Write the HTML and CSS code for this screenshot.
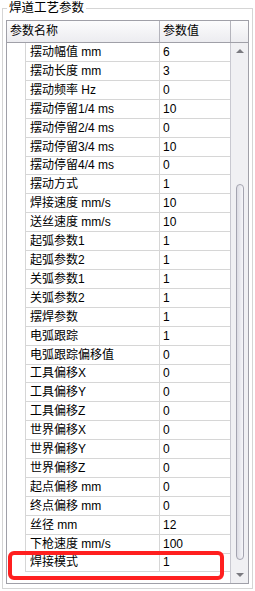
FILE: index.html
```html
<!DOCTYPE html>
<html lang="zh">
<head>
    <meta charset="UTF-8">
    <link rel="stylesheet" href="styles.css">
    <title>焊道工艺参数</title>
</head>
<body>
    <fieldset class="group">
        <legend class="title">焊道工艺参数</legend>
        <div class="grid">
            <div class="head">
                <div class="hcell">参数名称</div>
                <div class="hcell">参数值</div>
                <div class="hcell last"></div>
            </div>
            <div class="body">
                <div class="rows">
                    <div class="row"><div class="gut"></div><div class="name">摆动幅值 mm</div><div class="val">6</div></div>
                    <div class="row"><div class="gut"></div><div class="name">摆动长度 mm</div><div class="val">3</div></div>
                    <div class="row"><div class="gut"></div><div class="name">摆动频率 Hz</div><div class="val">0</div></div>
                    <div class="row"><div class="gut"></div><div class="name">摆动停留1/4 ms</div><div class="val">10</div></div>
                    <div class="row"><div class="gut"></div><div class="name">摆动停留2/4 ms</div><div class="val">0</div></div>
                    <div class="row"><div class="gut"></div><div class="name">摆动停留3/4 ms</div><div class="val">10</div></div>
                    <div class="row"><div class="gut"></div><div class="name">摆动停留4/4 ms</div><div class="val">0</div></div>
                    <div class="row"><div class="gut"></div><div class="name">摆动方式</div><div class="val">1</div></div>
                    <div class="row"><div class="gut"></div><div class="name">焊接速度 mm/s</div><div class="val">10</div></div>
                    <div class="row"><div class="gut"></div><div class="name">送丝速度 mm/s</div><div class="val">10</div></div>
                    <div class="row"><div class="gut"></div><div class="name">起弧参数1</div><div class="val">1</div></div>
                    <div class="row"><div class="gut"></div><div class="name">起弧参数2</div><div class="val">1</div></div>
                    <div class="row"><div class="gut"></div><div class="name">关弧参数1</div><div class="val">1</div></div>
                    <div class="row"><div class="gut"></div><div class="name">关弧参数2</div><div class="val">1</div></div>
                    <div class="row"><div class="gut"></div><div class="name">摆焊参数</div><div class="val">1</div></div>
                    <div class="row"><div class="gut"></div><div class="name">电弧跟踪</div><div class="val">1</div></div>
                    <div class="row"><div class="gut"></div><div class="name">电弧跟踪偏移值</div><div class="val">0</div></div>
                    <div class="row"><div class="gut"></div><div class="name">工具偏移X</div><div class="val">0</div></div>
                    <div class="row"><div class="gut"></div><div class="name">工具偏移Y</div><div class="val">0</div></div>
                    <div class="row"><div class="gut"></div><div class="name">工具偏移Z</div><div class="val">0</div></div>
                    <div class="row"><div class="gut"></div><div class="name">世界偏移X</div><div class="val">0</div></div>
                    <div class="row"><div class="gut"></div><div class="name">世界偏移Y</div><div class="val">0</div></div>
                    <div class="row"><div class="gut"></div><div class="name">世界偏移Z</div><div class="val">0</div></div>
                    <div class="row"><div class="gut"></div><div class="name">起点偏移 mm</div><div class="val">0</div></div>
                    <div class="row"><div class="gut"></div><div class="name">终点偏移 mm</div><div class="val">0</div></div>
                    <div class="row"><div class="gut"></div><div class="name">丝径 mm</div><div class="val">12</div></div>
                    <div class="row"><div class="gut"></div><div class="name">下枪速度 mm/s</div><div class="val">100</div></div>
                    <div class="row"><div class="gut"></div><div class="name">焊接模式</div><div class="val">1</div></div>
                </div>
                <div class="scroll">
                    <div class="arrow up"></div>
                    <div class="track"><div class="thumb"></div></div>
                    <div class="arrow down"></div>
                </div>
            </div>
        </div>
    </fieldset>
    <div class="mark"></div>
</body>
</html>
```

FILE: styles.css
```css
body {
  margin: 0;
  background: #fff;
  font-family: "Liberation Sans", "Noto Sans CJK SC", sans-serif;
  font-size: 12px;
  color: #000;
}
.group {
  margin: 0 0 0 2px;
  width: 251px;
  height: 589px;
  box-sizing: border-box;
  border: 1px solid #d5d5d5;
  padding: 4px 3px 5px 3px;
}
.title {
  margin-left: 1px;
  padding: 0 2px;
  line-height: 16px;
  font-size: 12.5px;
}
.grid {
  width: 243px;
  height: 564px;
  box-sizing: border-box;
  border: 1px solid #a0a0a8;
  display: flex;
  flex-direction: column;
}
.head {
  display: grid;
  grid-template-columns: 153px 71px 17px;
  height: 21px;
  border-bottom: 1px solid #a0a0a8;
  background: linear-gradient(#fcfcfd, #ececf0);
}
.hcell {
  border-right: 1px solid #b4b4bc;
  padding-left: 3px;
  line-height: 21px;
}
.hcell.last {
  border-right: none;
}
.body {
  flex: 1;
  display: flex;
}
.rows {
  width: 223px;
  border-right: 1px solid #c8c8d0;
}
.row {
  display: grid;
  grid-template-columns: 19px 134px 70px;
  height: 18.92px;
  line-height: 18px;
}
.gut {
  border-right: 1px solid #d6d6d6;
}
.name {
  border-right: 1px solid #d6d6d6;
  border-bottom: 1px solid #d6d6d6;
  padding-left: 4px;
  white-space: nowrap;
}
.val {
  border-bottom: 1px solid #d6d6d6;
  padding-left: 3px;
}
.scroll {
  width: 17px;
  background: #f0f0f3;
  display: flex;
  flex-direction: column;
}
.arrow {
  height: 17px;
  display: flex;
  align-items: center;
  justify-content: center;
}
.arrow::before {
  content: "";
  border-left: 4px solid transparent;
  border-right: 4px solid transparent;
}
.up::before {
  border-bottom: 4px solid #7a7a80;
  margin-top: -1px;
}
.down::before {
  border-top: 4px solid #7a7a80;
  margin-top: 1px;
}
.track {
  flex: 1;
  display: flex;
  flex-direction: column;
  align-items: center;
}
.thumb {
  margin-top: 124px;
  margin-bottom: 6px;
  flex: 1;
  width: 8px;
  box-sizing: border-box;
  border: 1px solid #a4a4b0;
  border-radius: 4px;
  background: linear-gradient(to right, #dcdce4, #f6f6f9);
}
.mark {
  position: absolute;
  left: 8px;
  top: 551px;
  width: 216px;
  height: 29px;
  box-sizing: border-box;
  border: 4px solid #ff1f1f;
  border-radius: 6px;
}
```
